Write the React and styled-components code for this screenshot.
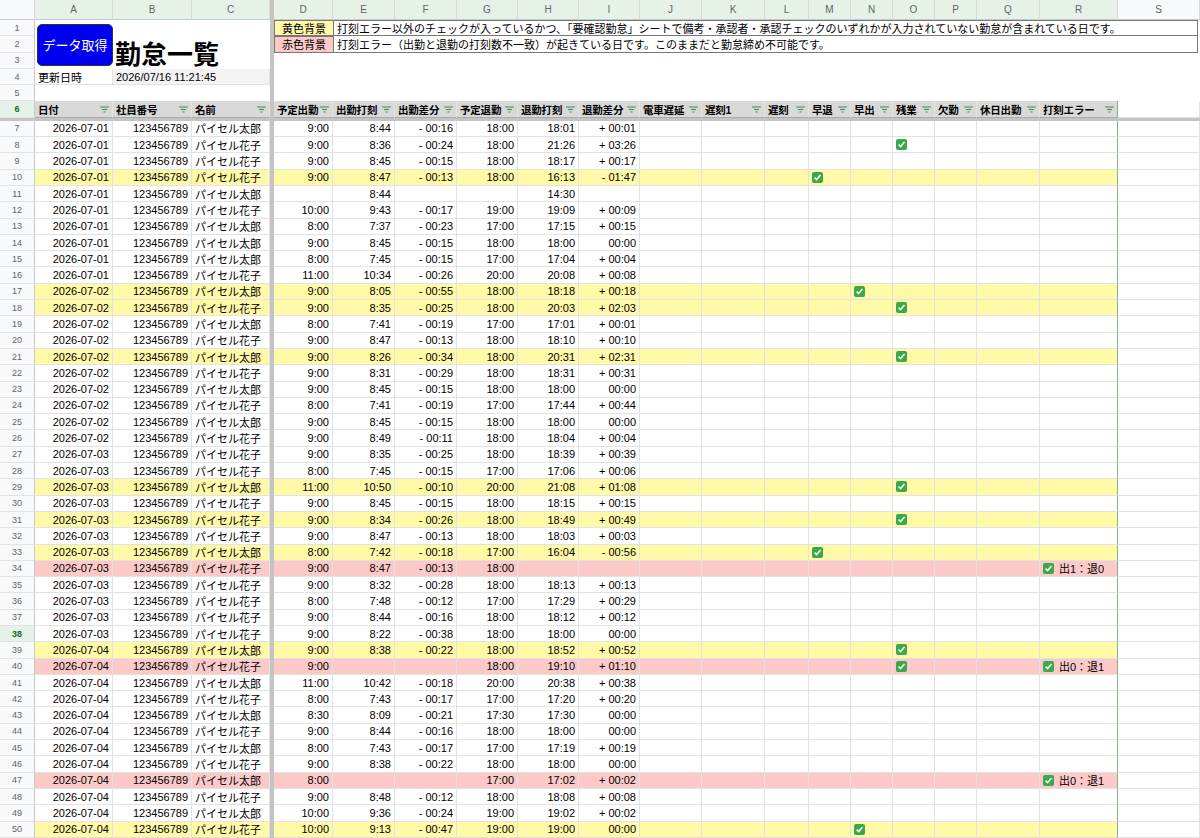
import React from "react";
import styled, { createGlobalStyle } from "styled-components";

const Global = createGlobalStyle`
  html,body{margin:0;padding:0;background:#fff;overflow:hidden;}
  body{font-family:"Liberation Sans","Noto Sans CJK JP",sans-serif;font-size:11px;color:#000;}
`;

const COLS = "35px 78px 79px 78px 4px 59px 62px 62px 61px 61px 61px 62px 63px 44px 42px 42px 42px 42px 63px 78px 82px";
const RH = "16.3px";

const Sheet = styled.div`width:1200px;height:838px;overflow:hidden;`;
const Row = styled.div`
  display:grid;grid-template-columns:${COLS};height:${p => p.$h || RH};
  background:${p => p.$bg || "#fff"};
`;
const Cell = styled.div`
  box-sizing:border-box;border-right:1px solid #e2e2e2;border-bottom:1px solid #e2e2e2;
  padding:0 3px;display:flex;align-items:center;white-space:nowrap;overflow:hidden;
  justify-content:${p => p.$right ? "flex-end" : p.$center ? "center" : "flex-start"};
  background:${p => p.$bg || "transparent"};
  font-weight:${p => p.$bold ? 700 : 400};
  ${p => p.$edge ? "border-right:1px solid #7fb48a;" : ""}
`;
const ColHead = styled(Cell)`
  justify-content:center;color:#5f6368;font-size:10px;background:${p => p.$sel ? "#e6f2e8" : "#f8f9fa"};
  border-right:1px solid #d8d8d8;border-bottom:1px solid #c8c8c8;
`;
const RowNum = styled(Cell)`
  justify-content:center;color:${p => p.$sel ? "#146c2e" : "#5f6368"};font-size:9px;
  background:${p => p.$sel ? "#e6f2e8" : "#f8f9fa"};font-weight:${p => p.$sel ? 700 : 400};
  border-right:1px solid #c8c8c8;
`;
const Freeze = styled.div`background:#c4c4c4;`;
const HLine = styled.div`height:3px;background:#c4c4c4;`;

const Top = styled.div`
  display:grid;grid-template-columns:${COLS};grid-template-rows:repeat(5,${RH});
`;
const Btn = styled.div`
  grid-column:2/3;grid-row:1/4;margin:4px 0 3px 2px;background:#0000f0;border:1px solid #333;
  border-radius:5px;color:#fff;font-size:13px;display:flex;align-items:center;justify-content:center;
`;
const Title = styled.div`
  grid-column:3/5;grid-row:2/4;font-size:26px;font-weight:700;display:flex;align-items:center;padding-left:2px;
`;
const Legend = styled(Cell)`
  background:${p => p.$bg};justify-content:center;font-size:11px;border:1px solid #777;border-right:none;
`;
const LegendText = styled(Cell)`
  border:1px solid #777;font-size:11px;
`;
const Head = styled(Cell)`
  background:#d9d9d9;font-weight:700;justify-content:space-between;padding-right:3px;
  border-bottom:1px solid #aaa;font-size:10.5px;letter-spacing:-0.2px;
`;
const Check = styled.span`
  display:inline-flex;width:11px;height:11px;border-radius:2px;background:#3aa94a;
  align-items:center;justify-content:center;margin-right:5px;flex:none;
`;

const Filter = () => (
  <svg width="9" height="7" viewBox="0 0 9 7" style={{ flex: "none" }}><path d="M0 1h9M2 3.5h5M3.5 6h2" stroke="#3c8a55" strokeWidth="1.2" /></svg>
);
const Tick = () => (
  <Check><svg width="9" height="9" viewBox="0 0 9 9"><path d="M1.6 4.6l2 2L7.5 2" stroke="#fff" strokeWidth="1.5" fill="none" /></svg></Check>
);

const letters = ["A","B","C","","D","E","F","G","H","I","J","K","L","M","N","O","P","Q","R","S"];
const heads = ["日付","社員番号","名前",null,"予定出勤","出勤打刻","出勤差分","予定退勤","退勤打刻","退勤差分","電車遅延","遅刻1","遅刻","早退","早出","残業","欠勤","休日出勤","打刻エラー"];

const T = "パイセル太郎", H = "パイセル花子";
const raw = [
["01",T,"9:00","8:44","-16","18:00","18:01","+01"],
["01",H,"9:00","8:36","-24","18:00","21:26","+3:26","","O"],
["01",H,"9:00","8:45","-15","18:00","18:17","+17"],
["01",H,"9:00","8:47","-13","18:00","16:13","-1:47","y","M"],
["01",T,"","8:44","","","14:30",""],
["01",H,"10:00","9:43","-17","19:00","19:09","+09"],
["01",T,"8:00","7:37","-23","17:00","17:15","+15"],
["01",T,"9:00","8:45","-15","18:00","18:00","0"],
["01",T,"8:00","7:45","-15","17:00","17:04","+04"],
["01",H,"11:00","10:34","-26","20:00","20:08","+08"],
["02",T,"9:00","8:05","-55","18:00","18:18","+18","y","N"],
["02",H,"9:00","8:35","-25","18:00","20:03","+2:03","y","O"],
["02",T,"8:00","7:41","-19","17:00","17:01","+01"],
["02",H,"9:00","8:47","-13","18:00","18:10","+10"],
["02",T,"9:00","8:26","-34","18:00","20:31","+2:31","y","O"],
["02",H,"9:00","8:31","-29","18:00","18:31","+31"],
["02",T,"9:00","8:45","-15","18:00","18:00","0"],
["02",H,"8:00","7:41","-19","17:00","17:44","+44"],
["02",T,"9:00","8:45","-15","18:00","18:00","0"],
["02",H,"9:00","8:49","-11","18:00","18:04","+04"],
["03",H,"9:00","8:35","-25","18:00","18:39","+39"],
["03",H,"8:00","7:45","-15","17:00","17:06","+06"],
["03",T,"11:00","10:50","-10","20:00","21:08","+1:08","y","O"],
["03",H,"9:00","8:45","-15","18:00","18:15","+15"],
["03",H,"9:00","8:34","-26","18:00","18:49","+49","y","O"],
["03",H,"9:00","8:47","-13","18:00","18:03","+03"],
["03",T,"8:00","7:42","-18","17:00","16:04","-56","y","M"],
["03",H,"9:00","8:47","-13","18:00","","","r","","出1：退0"],
["03",H,"9:00","8:32","-28","18:00","18:13","+13"],
["03",H,"8:00","7:48","-12","17:00","17:29","+29"],
["03",H,"9:00","8:44","-16","18:00","18:12","+12"],
["03",H,"9:00","8:22","-38","18:00","18:00","0"],
["04",T,"9:00","8:38","-22","18:00","18:52","+52","y","O"],
["04",H,"9:00","","","18:00","19:10","+1:10","r","O","出0：退1"],
["04",T,"11:00","10:42","-18","20:00","20:38","+38"],
["04",H,"8:00","7:43","-17","17:00","17:20","+20"],
["04",T,"8:30","8:09","-21","17:30","17:30","0"],
["04",H,"9:00","8:44","-16","18:00","18:00","0"],
["04",T,"8:00","7:43","-17","17:00","17:19","+19"],
["04",H,"9:00","8:38","-22","18:00","18:00","0"],
["04",T,"8:00","","","17:00","17:02","+02","r","","出0：退1"],
["04",H,"9:00","8:48","-12","18:00","18:08","+08"],
["04",T,"10:00","9:36","-24","19:00","19:02","+02"],
["04",H,"10:00","9:13","-47","19:00","19:00","0","y","N"],
];
const fmt = s => {
  if (s === "") return "";
  if (s === "0") return "00:00";
  const sign = s[0];
  let v = s.slice(1);
  if (!v.includes(":")) v = "00:" + v;
  else if (v.length === 4) v = "0" + v;
  return sign + " " + v;
};

export default function App() {
  const bgOf = k => (k === "y" ? "#fff9a8" : k === "r" ? "#fcc9c9" : "#fff");
  return (
    <Sheet>
      <Global />
      <Row $h="20px">
        <ColHead />
        {letters.map((l, i) => l === "" ? <Freeze key={i} /> : <ColHead key={i} $sel={i < 19}>{l}</ColHead>)}
      </Row>
      <Top>
        {[1, 2, 3, 4, 5].map(n => <RowNum key={n} style={{ gridColumn: 1, gridRow: n }}>{n}</RowNum>)}
        <Btn>データ取得</Btn>
        <Title>勤怠一覧</Title>
        <Freeze style={{ gridColumn: 5, gridRow: "1/6" }} />
        <Legend $bg="#fff9a8" style={{ gridColumn: 6, gridRow: 1 }}>黄色背景</Legend>
        <LegendText style={{ gridColumn: "7/22", gridRow: 1, marginRight: "2px" }}>打刻エラー以外のチェックが入っているかつ、「要確認勤怠」シートで備考・承認者・承認チェックのいずれかが入力されていない勤怠が含まれている日です。</LegendText>
        <Legend $bg="#fcc9c9" style={{ gridColumn: 6, gridRow: 2 }}>赤色背景</Legend>
        <LegendText style={{ gridColumn: "7/22", gridRow: 2, borderTop: "none", marginRight: "2px" }}>打刻エラー（出勤と退勤の打刻数不一致）が起きている日です。このままだと勤怠締め不可能です。</LegendText>
        <Cell style={{ gridColumn: 2, gridRow: 4 }}>更新日時</Cell>
        <Cell $bg="#f3f3f3" style={{ gridColumn: "3/5", gridRow: 4 }}>2026/07/16 11:21:45</Cell>
      </Top>
      <Row>
        <RowNum $sel>6</RowNum>
        {heads.map((h, i) => h === null ? <Freeze key={i} /> :
          <Head key={i} $edge={i === 18}><span>{h}</span><Filter /></Head>)}
        <Cell />
      </Row>
      <HLine />
      {raw.map((r, i) => {
        const [d, name, a, b, c, e, f, g, k, chk, err] = r;
        const n = i + 7;
        return (
          <Row key={n} $bg={bgOf(k)}>
            <RowNum $sel={n === 38}>{n}</RowNum>
            <Cell $right>2026-07-{d}</Cell>
            <Cell $right>123456789</Cell>
            <Cell>{name}</Cell>
            <Freeze />
            <Cell $right>{a}</Cell>
            <Cell $right>{b}</Cell>
            <Cell $right>{fmt(c)}</Cell>
            <Cell $right>{e}</Cell>
            <Cell $right>{f}</Cell>
            <Cell $right>{fmt(g)}</Cell>
            <Cell /><Cell /><Cell />
            <Cell>{chk === "M" && <Tick />}</Cell>
            <Cell>{chk === "N" && <Tick />}</Cell>
            <Cell>{chk === "O" && <Tick />}</Cell>
            <Cell /><Cell />
            <Cell $edge>{err && <><Tick />{err}</>}</Cell>
            <Cell $bg="#fff" />
          </Row>
        );
      })}
    </Sheet>
  );
}
